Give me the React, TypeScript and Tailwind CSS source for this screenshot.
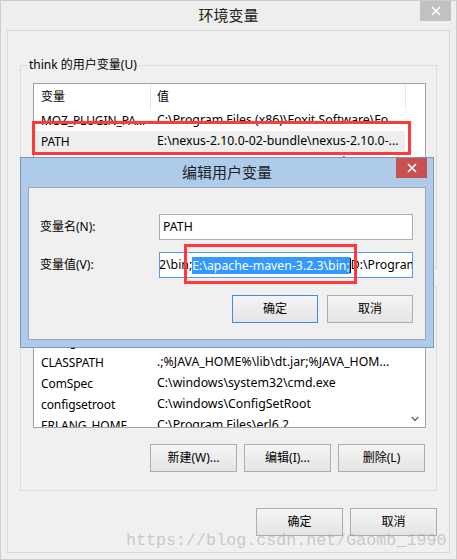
import React from "react";

const FONT = "font-['Noto_Sans','Noto_Sans_CJK_SC',sans-serif]";

function Btn({ label, className = "" }: { label: string; className?: string }) {
  return (
    <div
      className={`h-[28px] flex items-center justify-center border bg-linear-to-b from-[#f5f5f5] to-[#e4e4e4] text-[12px] text-black ${className}`}
    >
      {label}
    </div>
  );
}

function XIcon() {
  return (
    <svg width="10" height="10" viewBox="0 0 10 10">
      <path d="M1 1L9 9M9 1L1 9" stroke="white" strokeWidth="1.6" />
    </svg>
  );
}

type Row = [string, string, boolean?];

function ListView({ rows, chevron }: { rows: Row[]; chevron?: boolean }) {
  return (
    <div className="relative h-[124px] border border-[#a3a3a3] bg-white overflow-hidden">
      <div className="flex h-[26px] items-center">
        <div className="w-[117px] h-full flex items-center pl-[7px] border-r border-[#e8e8e8]">变量</div>
        <div className="w-[255px] h-full flex items-center pl-[6px] border-r border-[#e8e8e8]">值</div>
      </div>
      {rows.map(([a, b, sel], i) => (
        <div
          key={i}
          className={`flex h-[21px] items-center w-[371px] whitespace-nowrap ${sel ? "bg-[#eeeeee]" : ""}`}
        >
          <div className="w-[117px] shrink-0 pl-[7px] text-[12px] tracking-[-0.1px]">{a}</div>
          <div className="flex-1 pl-[6px] text-[12.3px]">{b}</div>
        </div>
      ))}
      {chevron && (
        <svg className="absolute right-[6px] bottom-[5px]" width="8" height="6" viewBox="0 0 8 6">
          <path d="M0.8 1L4 4.4L7.2 1" stroke="#6a6a6a" strokeWidth="1.5" fill="none" />
        </svg>
      )}
    </div>
  );
}

function Group({
  title,
  rows,
  chevron,
  className = "",
}: {
  title: string;
  rows: Row[];
  chevron?: boolean;
  className?: string;
}) {
  return (
    <div className={`relative border border-[#dcdcdc] pt-[17px] pl-[12px] pr-[10px] ${className}`}>
      <div className="absolute left-[6px] top-[-9px] px-[2px] bg-[#f0f0f0] leading-[16px]">{title}</div>
      <ListView rows={rows} chevron={chevron} />
      <div className="mt-[16px] flex justify-end gap-[7px] pr-[1px]">
        <Btn label="新建(W)..." className="w-[87px] border-[#adadad]" />
        <Btn label="编辑(I)..." className="w-[87px] border-[#adadad]" />
        <Btn label="删除(L)" className="w-[87px] border-[#adadad]" />
      </div>
    </div>
  );
}

const userRows: Row[] = [
  ["MOZ_PLUGIN_PA...", "C:\\Program Files (x86)\\Foxit Software\\Fo..."],
  ["PATH", "E:\\nexus-2.10.0-02-bundle\\nexus-2.10.0-...", true],
  ["TEMP", "%USERPROFILE%\\AppData\\Local\\Temp"],
  ["TMP", "%USERPROFILE%\\AppData\\Local\\Temp"],
];

const sysRows: Row[] = [
  ["asl.log", "Destination=file"],
  ["CLASSPATH", ".;%JAVA_HOME%\\lib\\dt.jar;%JAVA_HOM..."],
  ["ComSpec", "C:\\windows\\system32\\cmd.exe"],
  ["configsetroot", "C:\\windows\\ConfigSetRoot"],
  ["ERLANG_HOME", "C:\\Program Files\\erl6.2"],
];

export default function App() {
  return (
    <div
      className={`relative w-[457px] h-[560px] overflow-hidden border border-[#cdcdcd] bg-[#eeeeee] text-[12px] text-black ${FONT}`}
    >
      <div className="h-[29px] flex items-center justify-center text-[15px] text-[#202020]">环境变量</div>
      <div className="absolute top-0 right-[5px] w-[31px] h-[20px] bg-[#c1c1c1] flex items-center justify-center">
        <XIcon />
      </div>

      <div className="mx-[6px] h-[523px] border border-[#d9d9d9] bg-[#f0f0f0] px-[12px] pt-[34px]">
        <Group title="think 的用户变量(U)" rows={userRows} className="h-[204px]" />
        <Group title="系统变量(S)" rows={sysRows} chevron className="mt-[17px] h-[205px]" />
        <div className="mt-[17px] flex justify-end gap-[7px]">
          <Btn label="确定" className="w-[87px] border-[#adadad]" />
          <Btn label="取消" className="w-[87px] border-[#adadad]" />
        </div>
      </div>

      {/* Edit dialog */}
      <div className="absolute left-[19px] top-[156px] w-[414px] h-[191px] border border-[#8196b3] bg-[#aecbea] flex flex-col">
        <div className="h-[29px] shrink-0 flex items-center justify-center text-[15px] text-[#202020]">
          编辑用户变量
        </div>
        <div className="absolute right-[6px] top-0 w-[31px] h-[20px] bg-[#c75050] flex items-center justify-center">
          <XIcon />
        </div>
        <div className="mx-[7px] mb-[7px] flex-1 border border-[#97a7bb] bg-[#f0f0f0] pt-[26px] pl-[11px] pr-[12px]">
          <div className="flex items-center h-[26px]">
            <div className="w-[119px] shrink-0">变量名(N):</div>
            <div className="flex-1 h-full border border-[#abadb3] bg-white flex items-center pl-[3px] text-[12.3px]">
              PATH
            </div>
          </div>
          <div className="mt-[12px] flex items-center h-[26px]">
            <div className="w-[119px] shrink-0">变量值(V):</div>
            <div className="flex-1 h-full border border-[#569de5] bg-white flex items-center overflow-hidden whitespace-nowrap text-[12.3px]">
              <span className="ml-[-1px]">2\bin;</span>
              <span className="bg-[#3399ff] text-white leading-[17px]">E:\apache-maven-3.2.3\bin;</span>
              <span className="w-px h-[15px] bg-black shrink-0" />
              <span>D:\Program Files\Java</span>
            </div>
          </div>
          <div className="mt-[17px] flex justify-end gap-[9px]">
            <Btn label="确定" className="w-[86px] border-[#3c8fe0]" />
            <Btn label="取消" className="w-[86px] border-[#adadad]" />
          </div>
        </div>
      </div>

      {/* Red annotation boxes */}
      <div className="absolute left-[31px] top-[120px] w-[379px] h-[34px] border-[3px] border-[#ff3a3a]" />
      <div className="absolute left-[183px] top-[243px] w-[173px] h-[40px] border-[3px] border-[#ff3a3a]" />

      {/* Watermark */}
      <div className="absolute left-[125px] top-[530px] text-[16.7px] leading-[19px] font-['Liberation_Mono',monospace] text-[#a0a0a0]/50 whitespace-nowrap">
        https://blog.csdn.net/Gaomb_1990
      </div>
    </div>
  );
}
